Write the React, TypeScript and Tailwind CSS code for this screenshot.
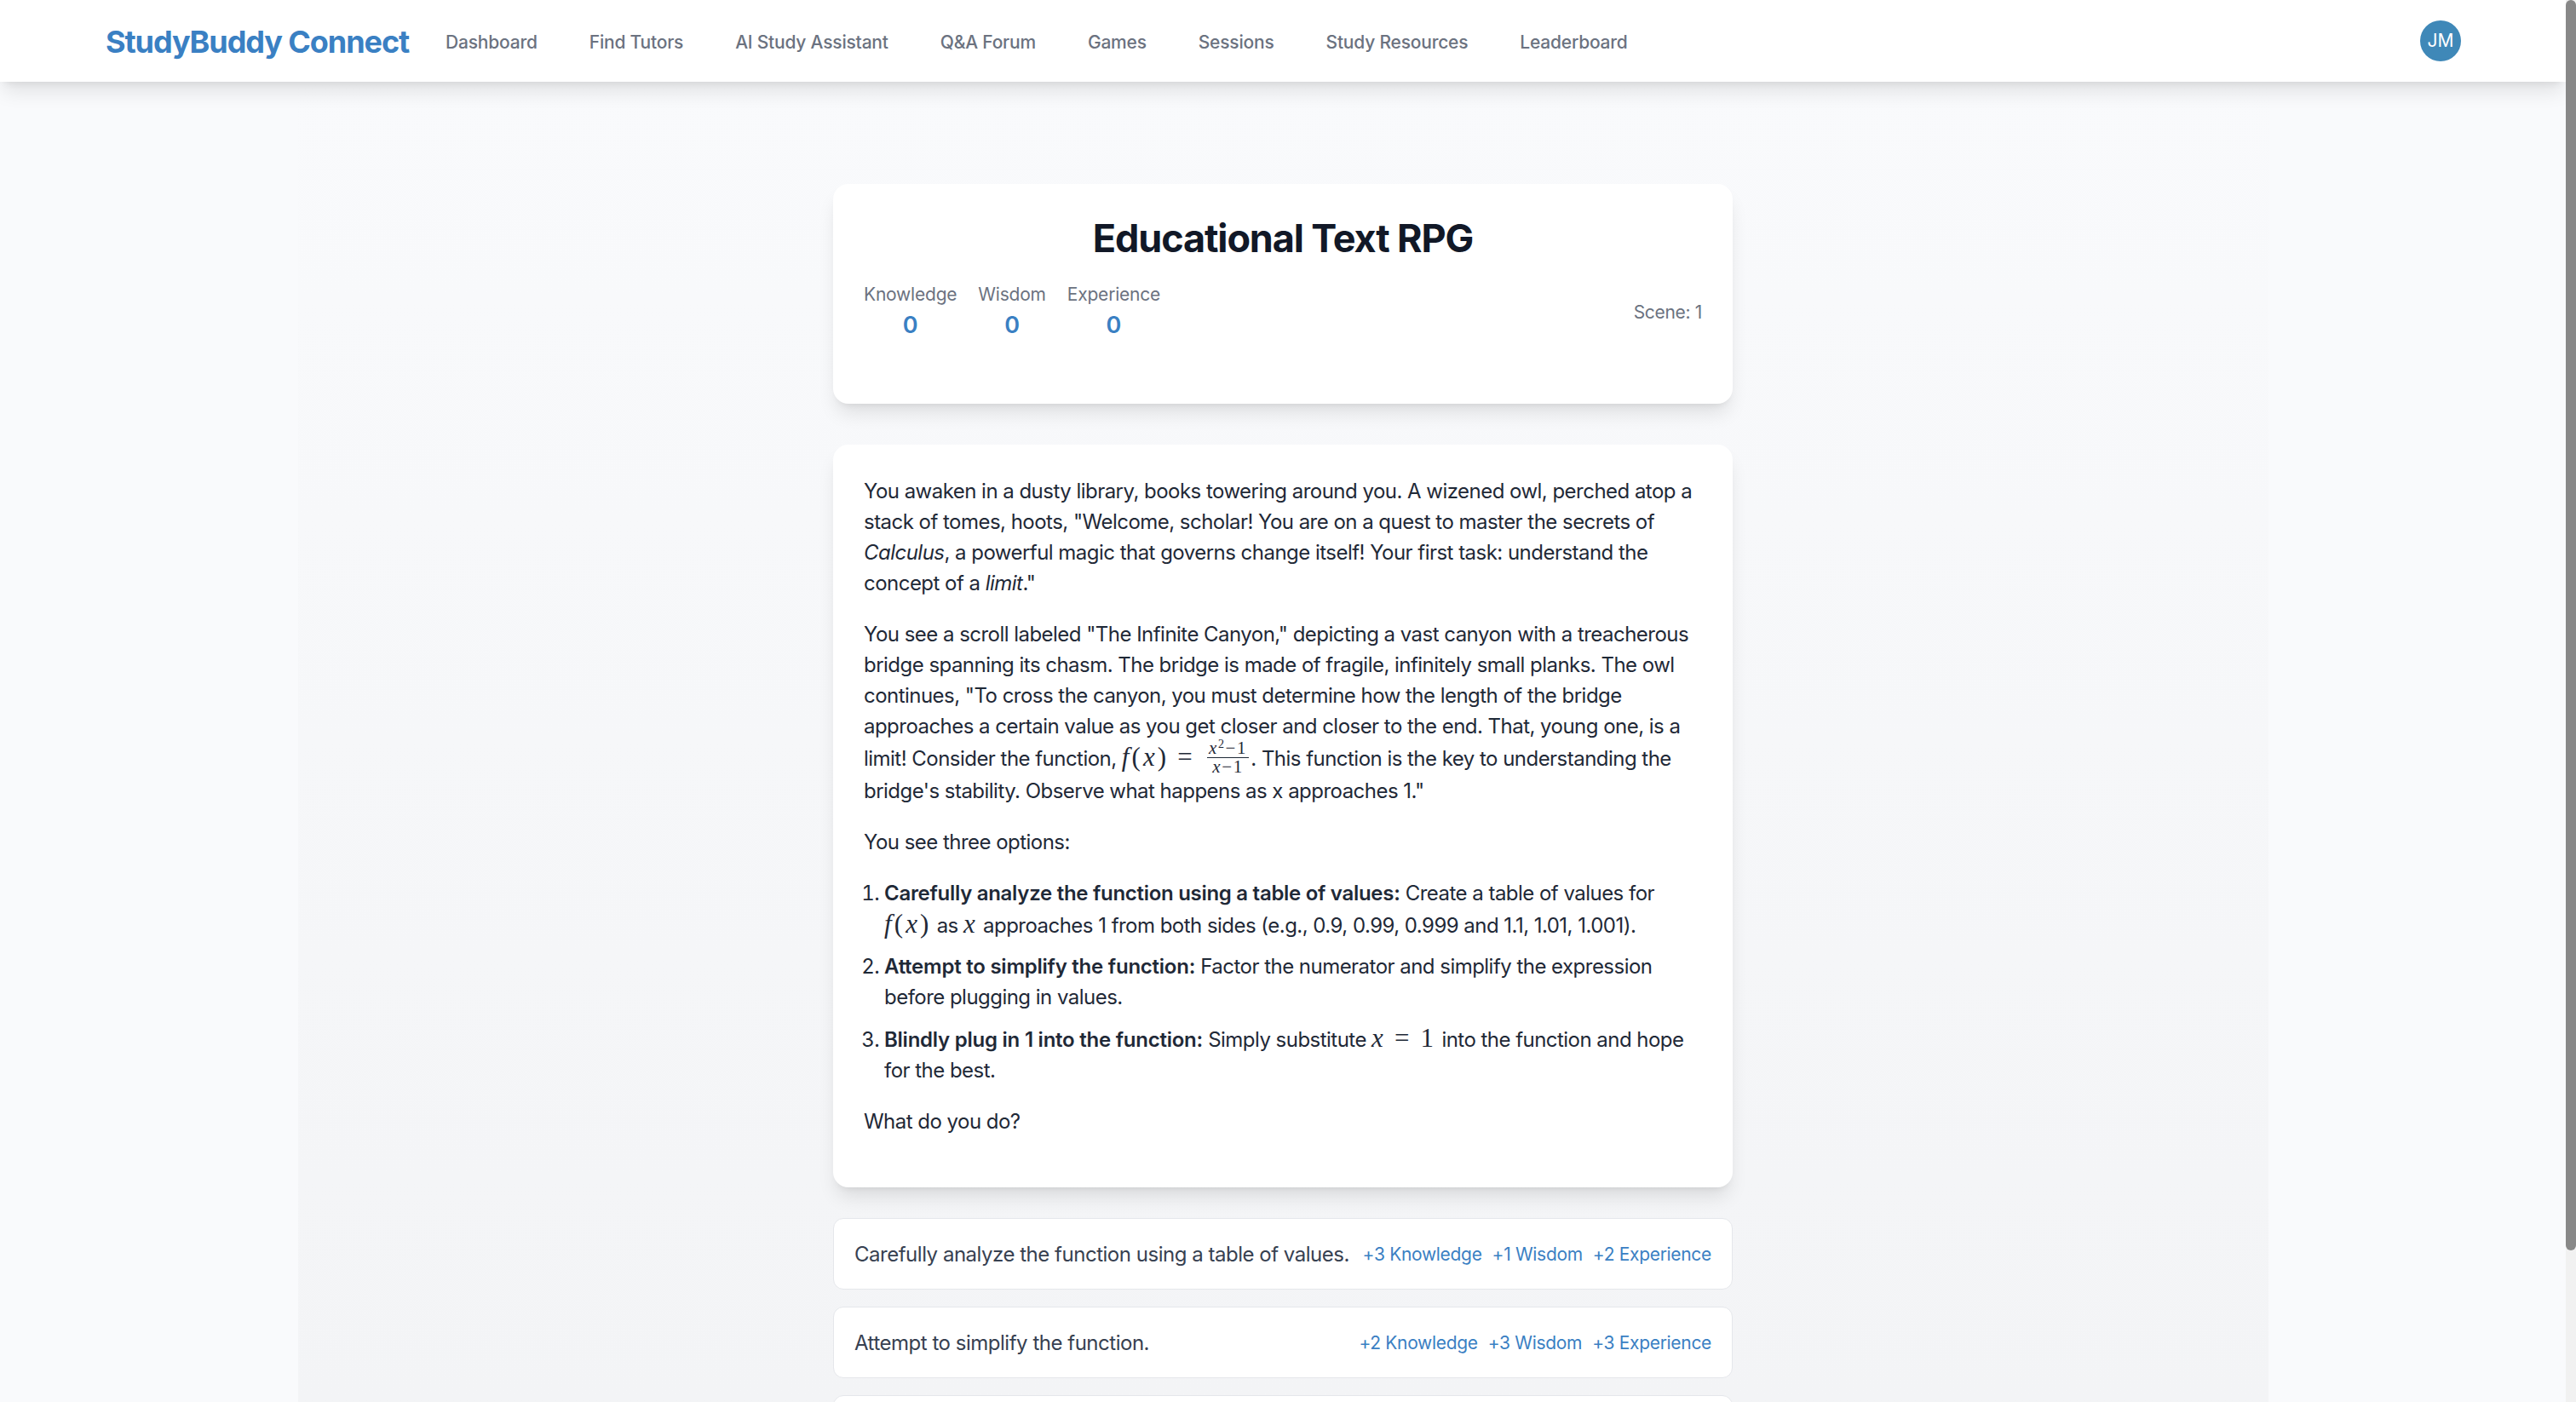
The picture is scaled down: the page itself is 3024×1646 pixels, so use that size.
// educational text rpg page
const navLinks = ['Dashboard', 'Find Tutors', 'AI Study Assistant', 'Q&A Forum', 'Games', 'Sessions', 'Study Resources', 'Leaderboard'];

const stats = ['Knowledge', 'Wisdom', 'Experience'];

const choices = [
    { text: 'Carefully analyze the function using a table of values.', rewards: ['+3 Knowledge', '+1 Wisdom', '+2 Experience'] },
    { text: 'Attempt to simplify the function.', rewards: ['+2 Knowledge', '+3 Wisdom', '+3 Experience'] },
    { text: 'Blindly plug in 1 into the function.', rewards: ['+0 Knowledge', '+0 Wisdom', '+1 Experience'] },
];

function MathText({ children }: { children: React.ReactNode }) {
    return <span className="font-['Liberation_Serif',serif] text-[31px] leading-[36px] tracking-[0.1em] whitespace-nowrap text-[#1f2937]">{children}</span>;
}

function Equals() {
    return <span className="mx-[10px]">=</span>;
}

function Fraction() {
    return (
        <span className="inline-flex flex-col items-center align-middle font-['Liberation_Serif',serif] italic text-[21px] leading-[21px] tracking-[0.08em] ml-[4px] mr-[2px] -mt-[6px]">
            <span className="border-b border-[#1f2937] px-[2px]">x<sup className="text-[14px] leading-none not-italic">2</sup><span className="not-italic">−1</span></span>
            <span>x<span className="not-italic">−1</span></span>
        </span>
    );
}

export default function App() {
    return (
        <div className="h-screen flex overflow-hidden font-['Inter',sans-serif] bg-[#f9fafc]">
            <div className="flex-1 min-w-0 overflow-hidden">
                <nav className="h-[96px] bg-white shadow-[0_15px_22px_-4px_rgba(0,0,0,0.1),0_6px_9px_-6px_rgba(0,0,0,0.1)] flex items-center pl-[124px] pr-[123px] relative">
                    <span className="text-[36px] font-bold tracking-[-0.03em] text-[#3a80c3] mr-[43px] pt-[1px]">StudyBuddy Connect</span>
                    <div className="flex gap-[61px] flex-1 pt-[3px]">
                        {navLinks.map((link) => (
                            <a key={link} className="text-[21px] font-medium tracking-[-0.01em] text-[#6b7280]">{link}</a>
                        ))}
                    </div>
                    <div className="w-[48px] h-[48px] rounded-full bg-[#3f88b8] text-white text-[21px] flex items-center justify-center">JM</div>
                </nav>
                <div className="w-[2313px] h-[1550px] mx-auto bg-gradient-to-b from-[#f9fafc] to-[#f3f4f6]">
                    <main className="w-[1056px] mx-auto pt-[120px]">
                        <section className="bg-white rounded-[18px] shadow-[0_15px_22px_-4px_rgba(0,0,0,0.1),0_6px_9px_-6px_rgba(0,0,0,0.1)] px-[36px] pt-[37px] pb-[35px] mb-[48px]">
                            <h1 className="text-[45px] leading-[54px] font-bold tracking-[-0.025em] text-[#111827] text-center mb-[24px]">Educational Text RPG</h1>
                            <div className="flex items-center justify-between mb-[36px]">
                                <div className="flex gap-[25px]">
                                    {stats.map((stat) => (
                                        <div key={stat} className="text-center">
                                            <div className="text-[21px] leading-[30px] tracking-[-0.01em] text-[#6b7280]">{stat}</div>
                                            <div className="text-[27px] leading-[42px] font-semibold text-[#3a80c3]">0</div>
                                        </div>
                                    ))}
                                </div>
                                <span className="text-[21px] leading-[30px] tracking-[-0.015em] text-[#6b7280]">Scene: 1</span>
                            </div>
                        </section>
                        <section className="bg-white rounded-[18px] shadow-[0_15px_22px_-4px_rgba(0,0,0,0.1),0_6px_9px_-6px_rgba(0,0,0,0.1)] px-[36px] pt-[37px] pb-[35px] mb-[36px] text-[24px] leading-[36px] tracking-[-0.022em] text-[#1f2937]">
                            <p className="mb-[24px]">
                                You awaken in a dusty library, books towering around you. A wizened owl, perched atop a stack of tomes, hoots, "Welcome, scholar! You are on a quest to master the secrets of <em>Calculus</em>, a powerful magic that governs change itself! Your first task: understand the concept of a <em>limit</em>."
                            </p>
                            <p className="mb-[24px]">
                                You see a scroll labeled "The Infinite Canyon," depicting a vast canyon with a treacherous bridge spanning its chasm. The bridge is made of fragile, infinitely small planks. The owl continues, "To cross the canyon, you must determine how the length of the bridge approaches a certain value as you get closer and closer to the end. That, young one, is a limit! Consider the function, <MathText><i>f</i>(<i>x</i>)<Equals /></MathText><Fraction />. This function is the key to understanding the bridge's stability. Observe what happens as x approaches 1."
                            </p>
                            <p className="mb-[24px]">You see three options:</p>
                            <ol className="list-decimal pl-[24px] mb-[24px]">
                                <li className="mb-[12px]">
                                    <strong className="font-semibold tracking-[-0.012em]">Carefully analyze the function using a table of values:</strong> Create a table of values for <MathText><i>f</i>(<i>x</i>)</MathText> as <MathText><i>x</i></MathText> approaches 1 from both sides (e.g., 0.9, 0.99, 0.999 and 1.1, 1.01, 1.001).
                                </li>
                                <li className="mb-[12px]">
                                    <strong className="font-semibold tracking-[-0.01em]">Attempt to simplify the function:</strong> Factor the numerator and simplify the expression before plugging in values.
                                </li>
                                <li>
                                    <strong className="font-semibold tracking-[-0.01em]">Blindly plug in 1 into the function:</strong> Simply substitute <MathText><i>x</i><Equals />1</MathText> into the function and hope for the best.
                                </li>
                            </ol>
                            <p className="mb-[24px]">What do you do?</p>
                        </section>
                        <div className="flex flex-col gap-[20px]">
                            {choices.map((choice) => (
                                <button key={choice.text} className="h-[84px] bg-white border-[1.5px] border-[#e5e7eb] rounded-[12px] px-[24px] pt-[2px] flex items-center justify-between text-[24px] tracking-[-0.02em] text-[#374151]">
                                    <span className="whitespace-nowrap">{choice.text}</span>
                                    <span className="flex gap-[12px] text-[21px] tracking-[-0.015em] text-[#3a80c3] whitespace-nowrap">
                                        {choice.rewards.map((reward) => (
                                            <span key={reward}>{reward}</span>
                                        ))}
                                    </span>
                                </button>
                            ))}
                        </div>
                    </main>
                </div>
            </div>
            <div className="w-[12px] h-full bg-[#f1f1f1] flex-shrink-0">
                <div className="h-[1468px] bg-[#888888] rounded-full" />
            </div>
        </div>
    );
}
